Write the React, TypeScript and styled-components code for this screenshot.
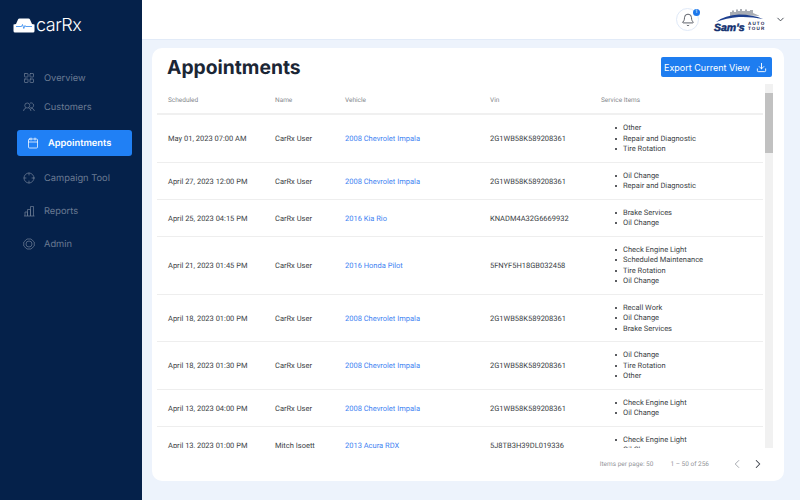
import React from 'react';
import styled, { createGlobalStyle } from 'styled-components';
import {
    Bell,
    Calendar,
    ChevronDown,
    ChevronLeft,
    ChevronRight,
    Crosshair,
    Download,
    LayoutGrid,
} from 'lucide-react';

const GlobalStyle = createGlobalStyle`
    html, body {
        margin: 0;
        padding: 0;
        height: 100%;
        overflow: hidden;
        text-rendering: geometricPrecision;
    }
    #root {
        height: 100%;
    }
    * {
        box-sizing: border-box;
    }
`;

interface IconProps {
    size?: number;
    strokeWidth?: number;
}

const CustomersIcon = ({ size = 12, strokeWidth = 1.5 }: IconProps) => (
    <svg width={size} height={size} viewBox="0 0 24 24" fill="none" stroke="currentColor" strokeWidth={strokeWidth}>
        <circle cx="8.5" cy="9" r="5" />
        <path d="M1 20 Q1.5 15 6 14 M11 14 Q15.5 15 16 20" />
        <path d="M14 4.3 A5 5 0 1 1 15 13.6 Q22 15 23 20" />
    </svg>
);

const ReportsIcon = ({ size = 12, strokeWidth = 1.5 }: IconProps) => (
    <svg width={size} height={size} viewBox="0 0 24 24" fill="none" stroke="currentColor" strokeWidth={strokeWidth}>
        <path d="M2 22 H23" />
        <path d="M4 22 V14 H9 V22 M9 22 V9 H15 V22 M15 22 V3 H21 V22" />
    </svg>
);

const AdminIcon = ({ size = 12, strokeWidth = 1.5 }: IconProps) => (
    <svg width={size} height={size} viewBox="0 0 24 24" fill="none" stroke="currentColor" strokeWidth={strokeWidth}>
        <path d="M8 2 H16 L22.5 8 V16 L16 22 H8 L1.5 16 V8 Z" />
        <circle cx="12" cy="12" r="6" />
    </svg>
);

const navItems = [
    { label: 'Overview', Icon: LayoutGrid, space: 3 },
    { label: 'Customers', Icon: CustomersIcon, space: 10 },
    { label: 'Appointments', Icon: Calendar, space: 9, active: true },
    { label: 'Campaign Tool', Icon: Crosshair, space: 7 },
    { label: 'Reports', Icon: ReportsIcon, space: 7 },
    { label: 'Admin', Icon: AdminIcon, space: 0 },
];

const rows = [
    {
        scheduled: 'May 01, 2023 07:00 AM',
        name: 'CarRx User',
        vehicle: '2008 Chevrolet Impala',
        vin: '2G1WB58K589208361',
        items: ['Other', 'Repair and Diagnostic', 'Tire Rotation'],
    },
    {
        scheduled: 'April 27, 2023 12:00 PM',
        name: 'CarRx User',
        vehicle: '2008 Chevrolet Impala',
        vin: '2G1WB58K589208361',
        items: ['Oil Change', 'Repair and Diagnostic'],
    },
    {
        scheduled: 'April 25, 2023 04:15 PM',
        name: 'CarRx User',
        vehicle: '2016 Kia Rio',
        vin: 'KNADM4A32G6669932',
        items: ['Brake Services', 'Oil Change'],
    },
    {
        scheduled: 'April 21, 2023 01:45 PM',
        name: 'CarRx User',
        vehicle: '2016 Honda Pilot',
        vin: '5FNYF5H18GB032458',
        items: ['Check Engine Light', 'Scheduled Maintenance', 'Tire Rotation', 'Oil Change'],
    },
    {
        scheduled: 'April 18, 2023 01:00 PM',
        name: 'CarRx User',
        vehicle: '2008 Chevrolet Impala',
        vin: '2G1WB58K589208361',
        items: ['Recall Work', 'Oil Change', 'Brake Services'],
    },
    {
        scheduled: 'April 18, 2023 01:30 PM',
        name: 'CarRx User',
        vehicle: '2008 Chevrolet Impala',
        vin: '2G1WB58K589208361',
        items: ['Oil Change', 'Tire Rotation', 'Other'],
    },
    {
        scheduled: 'April 13, 2023 04:00 PM',
        name: 'CarRx User',
        vehicle: '2008 Chevrolet Impala',
        vin: '2G1WB58K589208361',
        items: ['Check Engine Light', 'Oil Change'],
    },
    {
        scheduled: 'April 13, 2023 01:00 PM',
        name: 'Mitch Isoett',
        vehicle: '2013 Acura RDX',
        vin: '5J8TB3H39DL019336',
        items: ['Check Engine Light', 'Oil Change'],
    },
];

const CarLogo = () => (
    <svg width="22" height="15" viewBox="0 0 22 15">
        <path
            d="M0.5 6.5 L3 6 L5 1.5 Q5.4 0.5 6.6 0.5 L15.4 0.5 Q16.6 0.5 17 1.5 L19 6 L21.5 6.5 L21.5 13 Q21.5 14.5 20 14.5 L2 14.5 Q0.5 14.5 0.5 13 Z"
            fill="#ffffff"
        />
        <path
            d="M3 8.5 H8.5 L9.5 6.5 L10.8 10.5 L12 7.5 L12.6 8.5 H19"
            fill="none"
            stroke="#2f86ee"
            strokeWidth="0.8"
        />
    </svg>
);

const SamsLogo = () => (
    <svg width="52" height="24" viewBox="0 0 52 24">
        <path
            d="M17 8 V4 H19 V2.5 H21 V4 H23 V1.5 H25 V3 H27 V1 H29 V3 H32 V1.5 H34 V3 H37 V2 H40 V5 L47 8 L30 7 Z"
            fill="#a9adb4"
        />
        <path d="M3 14 Q12 7 26 6.5 Q40 6.5 50 11 Q38 8.5 26 9 Q13 10 3 14 Z" fill="#1d3f8f" />
        <text x="1" y="22.5" fontFamily="'Liberation Sans', sans-serif" fontStyle="italic" fontWeight="700" fontSize="10.5" fill="#12306f" stroke="#12306f" strokeWidth="0.5">
            Sam's
        </text>
        <text x="35" y="17" fontFamily="'Liberation Sans', sans-serif" fontWeight="700" fontSize="4.6" letterSpacing="1.1" fill="#12204a">
            AUTO
        </text>
        <text x="35" y="22" fontFamily="'Liberation Sans', sans-serif" fontWeight="700" fontSize="4.6" letterSpacing="1.1" fill="#12204a">
            TOUR
        </text>
    </svg>
);

const App = () => {
    return (
        <Page>
            <GlobalStyle />
            <Sidebar>
                <Logo>
                    <CarLogo />
                    <LogoName>carRx</LogoName>
                </Logo>
                <Nav>
                    {navItems.map(({ label, Icon, space, active }) => (
                        <NavItem key={label} $active={active} $space={space}>
                            <Icon size={12} strokeWidth={1.5} />
                            <span>{label}</span>
                        </NavItem>
                    ))}
                </Nav>
            </Sidebar>
            <Main>
                <Header>
                    <BellButton>
                        <Bell size={14} strokeWidth={1.4} />
                        <BellBadge>1</BellBadge>
                    </BellButton>
                    <SamsLogo />
                    <ChevronDown size={11} strokeWidth={2} color="#3a3f48" />
                </Header>
                <Content>
                    <Card>
                        <CardTop>
                            <Title>Appointments</Title>
                            <ExportButton>
                                <span>Export Current View</span>
                                <Download size={11} strokeWidth={2} />
                            </ExportButton>
                        </CardTop>
                        <TableArea>
                            <Table>
                                <HeadRow>
                                    <span>Scheduled</span>
                                    <span>Name</span>
                                    <span>Vehicle</span>
                                    <span>Vin</span>
                                    <span>Service Items</span>
                                </HeadRow>
                                {rows.map((row) => (
                                    <Row key={row.scheduled}>
                                        <span>{row.scheduled}</span>
                                        <span>{row.name}</span>
                                        <VehicleLink>{row.vehicle}</VehicleLink>
                                        <span>{row.vin}</span>
                                        <ServiceList>
                                            {row.items.map((item) => (
                                                <li key={item}>{item}</li>
                                            ))}
                                        </ServiceList>
                                    </Row>
                                ))}
                            </Table>
                            <ScrollTrack>
                                <ScrollArrow $up />
                                <ScrollThumb />
                                <ScrollSpace />
                                <ScrollArrow />
                            </ScrollTrack>
                        </TableArea>
                        <Footer>
                            <span>Items per page: 50</span>
                            <RangeText>1 – 50 of 256</RangeText>
                            <Pager>
                                <ChevronLeft size={14} strokeWidth={1.5} color="#9a9ea5" />
                                <ChevronRight size={14} strokeWidth={1.8} color="#3a3f48" />
                            </Pager>
                        </Footer>
                    </Card>
                </Content>
            </Main>
        </Page>
    );
};

export default App;

const Page = styled.div`
    display: flex;
    width: 800px;
    height: 500px;
    overflow: hidden;
    background-color: #edf3fc;
`;

const Sidebar = styled.aside`
    width: 142px;
    flex-shrink: 0;
    background-color: #05214a;
    padding: 16px 10px 0 13px;
`;

const Logo = styled.div`
    display: flex;
    align-items: center;
    gap: 1px;
    height: 18px;
`;

const LogoName = styled.span`
    color: #ffffff;
    font-family: Inter, sans-serif;
    font-weight: 300;
    font-size: 18px;
    letter-spacing: -0.5px;
`;

const Nav = styled.nav`
    display: flex;
    flex-direction: column;
    margin-top: 31px;
    padding-left: 4px;
`;

const NavItem = styled.div<{ $active?: boolean; $space: number }>`
    display: flex;
    align-items: center;
    gap: 9px;
    height: 26px;
    width: 115px;
    margin-bottom: ${({ $space }) => $space}px;
    padding-left: ${({ $active }) => ($active ? '10px' : '6px')};
    border-radius: 3px;
    font-family: Inter, sans-serif;
    font-size: 9.3px;
    font-weight: ${({ $active }) => ($active ? 600 : 400)};
    color: ${({ $active }) => ($active ? '#ffffff' : '#6b7b93')};
    background-color: ${({ $active }) => ($active ? '#2080f5' : 'transparent')};
`;

const Main = styled.main`
    flex: 1;
    min-width: 0;
    display: flex;
    flex-direction: column;
`;

const Header = styled.header`
    height: 40px;
    flex-shrink: 0;
    display: flex;
    align-items: center;
    justify-content: flex-end;
    gap: 10px;
    padding-right: 14px;
    background-color: #ffffff;
    border-bottom: 1px solid #e2ebf8;
`;

const BellButton = styled.div`
    position: relative;
    width: 23px;
    height: 23px;
    display: flex;
    align-items: center;
    justify-content: center;
    border: 1px solid #dfe9f8;
    border-radius: 50%;
    color: #3a3f48;
    margin-right: 4px;
`;

const BellBadge = styled.span`
    position: absolute;
    top: 0;
    right: -2px;
    width: 7px;
    height: 7px;
    border-radius: 50%;
    background-color: #1c78ec;
    color: #ffffff;
    font-family: Roboto, sans-serif;
    font-size: 5px;
    line-height: 7px;
    text-align: center;
`;

const Content = styled.div`
    flex: 1;
    min-height: 0;
    padding: 8px 16px 19px 10px;
`;

const Card = styled.section`
    height: 100%;
    display: flex;
    flex-direction: column;
    background-color: #ffffff;
    border-radius: 10px;
    padding: 0 11px 0 5px;
`;

const CardTop = styled.div`
    height: 36px;
    flex-shrink: 0;
    display: flex;
    align-items: center;
    justify-content: space-between;
    padding: 2px 1px 0 10px;
`;

const Title = styled.h1`
    margin: 0;
    font-family: Inter, sans-serif;
    font-size: 19.3px;
    font-weight: 700;
    color: #1b2635;
`;

const ExportButton = styled.button`
    width: 111px;
    height: 20px;
    display: flex;
    align-items: center;
    justify-content: space-between;
    padding: 0 5px 0 3px;
    border: none;
    border-radius: 2px;
    background-color: #1e7df0;
    color: #ffffff;
    font-family: Inter, sans-serif;
    font-size: 9px;
`;

const TableArea = styled.div`
    flex: 1;
    min-height: 0;
    display: flex;
    gap: 2px;
`;

const Table = styled.div`
    flex: 1;
    min-width: 0;
    overflow: hidden;
    font-family: Roboto, sans-serif;
    font-size: 7.5px;
    color: #3c3f46;
`;

const columns = 'grid-template-columns: 107px 70px 145px 111px 1fr;';

const HeadRow = styled.div`
    display: grid;
    ${columns}
    align-items: center;
    height: 31px;
    padding: 3px 0 0 11px;
    border-bottom: 2px solid #f0f0f0;
    font-size: 6.5px;
    color: #85888d;
`;

const Row = styled.div`
    display: grid;
    ${columns}
    align-items: center;
    padding: 8px 0 7px 11px;
    border-bottom: 1px solid #eeeeee;
`;

const VehicleLink = styled.a`
    color: #3f84f2;
`;

const ServiceList = styled.ul`
    margin: 0;
    padding: 0 0 0 14px;
    list-style: none;
    line-height: 10.5px;

    li {
        display: flex;
        align-items: center;
        gap: 6px;
    }

    li::before {
        content: '';
        width: 2px;
        height: 2px;
        border-radius: 50%;
        background-color: #23262c;
    }
`;

const ScrollTrack = styled.div`
    width: 8px;
    flex-shrink: 0;
    display: flex;
    flex-direction: column;
    background-color: #f1f1f1;
`;

const ScrollArrow = styled.div<{ $up?: boolean }>`
    height: 9px;
    flex-shrink: 0;
    display: flex;
    align-items: center;
    justify-content: center;

    ::after {
        content: '';
        border-left: 2px solid transparent;
        border-right: 2px solid transparent;
        ${({ $up }) => ($up ? 'border-bottom: 3px solid #8a8a8a;' : 'border-top: 3px solid #333333;')}
    }
`;

const ScrollThumb = styled.div`
    height: 60px;
    flex-shrink: 0;
    background-color: #c1c1c1;
`;

const ScrollSpace = styled.div`
    flex: 1;
`;

const Footer = styled.footer`
    height: 33px;
    flex-shrink: 0;
    display: flex;
    align-items: center;
    justify-content: flex-end;
    padding: 0 8px 2px 0;
    font-family: Roboto, sans-serif;
    font-size: 6.5px;
    color: #93959a;
`;

const RangeText = styled.span`
    margin-left: 17px;
`;

const Pager = styled.div`
    display: flex;
    align-items: center;
    gap: 7px;
    margin-left: 21px;
`;
